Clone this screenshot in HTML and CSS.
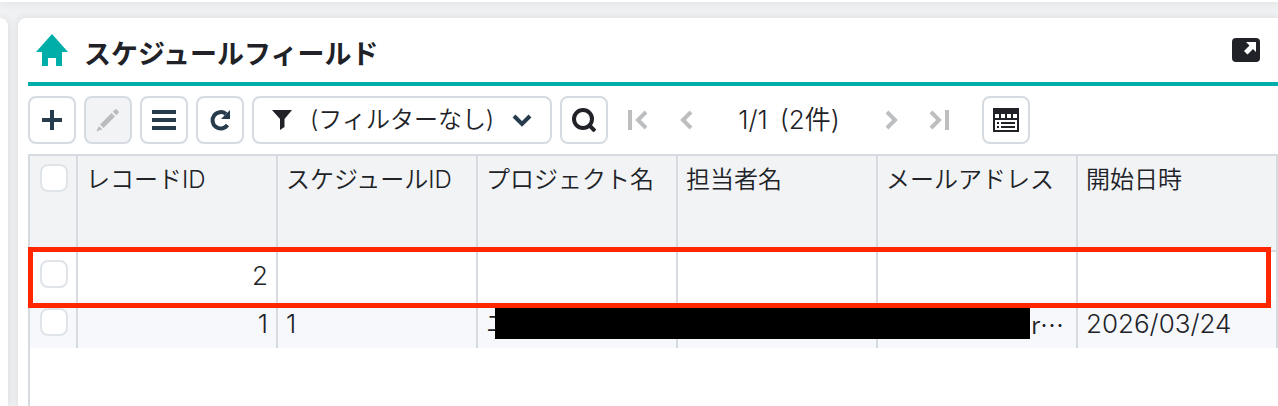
FILE: index.html
```
<!DOCTYPE html>
<html lang="ja">
<head>
    <meta charset="UTF-8">
    <meta name="viewport" content="width=device-width, initial-scale=1.0">
    <title>スケジュールフィールド</title>
    <link rel="stylesheet" href="styles.css">
</head>
<body>
    <div class="topbar"></div>
    <div class="layout">
        <aside class="side"></aside>
        <main class="panel">
            <header class="panel-head">
                <svg class="home" viewBox="0 0 32 32"><path d="M16 0 32 18H26V32H20V24H12V32H6V18H0Z"/></svg>
                <h1>スケジュールフィールド</h1>
                <button class="expand" aria-label="拡大">
                    <svg viewBox="0 0 28 24"><rect width="28" height="24" rx="4"/><path class="arrow" d="M14 4H24V14L21 11 15.500 16.500 12 13 17.500 7.500Z"/></svg>
                </button>
            </header>

            <div class="toolbar">
                <button class="btn" aria-label="追加"><svg viewBox="0 0 24 24"><path class="line" d="M12 2V22M2 12H22"/></svg></button>
                <button class="btn" aria-label="編集" disabled><svg viewBox="0 0 24 24"><path d="M4 16.500 15.500 5 19 8.500 7.500 20ZM16.800 3.700 18.800 1.700Q20 .7 21.300 2L22.300 3Q23.500 4.200 22.300 5.300L20.300 7.300ZM3 18 6.200 21.200 1 23.200Q.4 23 1 22Z"/></svg></button>
                <button class="btn" aria-label="一覧"><svg viewBox="0 0 24 24"><path class="line" d="M0 4H24M0 12H24M0 20H24"/></svg></button>
                <button class="btn" aria-label="再読み込み"><svg viewBox="0 0 24 24"><path class="line" d="M19.500 17A8.200 8.200 0 1 1 18 6"/><path d="M22 2V11H13Z"/></svg></button>
                <div class="filter">
                    <svg class="funnel" viewBox="0 0 20 20"><path d="M0 0H20L12.500 9V17L8 20V9Z"/></svg>
                    <select aria-label="フィルター">
                        <option>(フィルターなし)</option>
                    </select>
                    <svg class="chevron" viewBox="0 0 20 14"><path class="line" d="M2 2 10 10 18 2"/></svg>
                </div>
                <button class="btn search" aria-label="検索"><svg viewBox="0 0 24 24"><circle class="line" cx="11" cy="11" r="9"/><path class="line" d="M16.500 16.500 23 23"/></svg></button>
                <nav class="pager">
                    <button aria-label="最初" disabled><svg viewBox="0 0 24 24"><path class="line" d="M4 2V22M20 4 12 12 20 20"/></svg></button>
                    <button aria-label="前へ" disabled><svg viewBox="0 0 24 24"><path class="line" d="M17 4 9 12 17 20"/></svg></button>
                    <span class="pages"><span>1/1</span> <span>(2件)</span></span>
                    <button aria-label="次へ" disabled><svg viewBox="0 0 24 24"><path class="line" d="M7 4 15 12 7 20"/></svg></button>
                    <button aria-label="最後" disabled><svg viewBox="0 0 24 24"><path class="line" d="M3 4 11 12 3 20M19 2V22"/></svg></button>
                </nav>
                <button class="btn view" aria-label="表示"><svg viewBox="0 0 26 24"><path fill-rule="evenodd" d="M0 0H26V24H0ZM2 6V10H6V6ZM8 6V10H12V6ZM14 6V10H18V6ZM20 6V10H24V6ZM2 12V22H24V12Z"/><path d="M4 14H6V16H4ZM8 14H22V16H8ZM4 18H6V20H4ZM8 18H22V20H8Z"/></svg></button>
            </div>

            <div class="grid">
                <table>
                    <colgroup>
                        <col class="check-col">
                        <col span="6">
                    </colgroup>
                    <thead>
                        <tr>
                            <th class="check"><input type="checkbox" aria-label="すべて選択"></th>
                            <th>レコードID</th>
                            <th>スケジュールID</th>
                            <th>プロジェクト名</th>
                            <th>担当者名</th>
                            <th>メールアドレス</th>
                            <th>開始日時</th>
                        </tr>
                    </thead>
                    <tbody>
                        <tr>
                            <td class="check"><input type="checkbox" aria-label="レコード2を選択"></td>
                            <td class="num">2</td>
                            <td></td>
                            <td></td>
                            <td></td>
                            <td></td>
                            <td></td>
                        </tr>
                        <tr>
                            <td class="check"><input type="checkbox" aria-label="レコード1を選択"></td>
                            <td class="num">1</td>
                            <td class="digits">1</td>
                            <td class="masked">エ<span class="mask"></span></td>
                            <td></td>
                            <td class="mail">r⋯</td>
                            <td class="digits">2026/03/24</td>
                        </tr>
                    </tbody>
                </table>
                <div class="highlight"></div>
            </div>
        </main>
    </div>
</body>
</html>
```
FILE: styles.css
```
* {
    box-sizing: border-box;
}
body {
    margin: 0;
    min-height: 100vh;
    display: flex;
    flex-direction: column;
    background: #f0f1f3;
    color: #202227;
    font-family: Inter, "Noto Sans CJK JP", sans-serif;
    font-size: 24px;
    font-weight: 350;
    line-height: 32px;
    overflow: hidden;
}
button {
    padding: 0;
    border: none;
    background: none;
    display: flex;
    align-items: center;
    justify-content: center;
}
svg {
    display: block;
    fill: currentColor;
}
.line {
    fill: none;
    stroke: currentColor;
    stroke-width: 4;
}
.topbar {
    height: 2px;
    background: #fff;
    box-shadow: 0 0 8px rgba(0, 0, 0, 0.2);
}
.layout {
    flex: 1;
    display: flex;
    gap: 10px;
    padding-top: 16px;
}
.side {
    width: 8px;
    background: #fff;
    border-radius: 0 8px 0 0;
    box-shadow: 0 0 8px rgba(0, 0, 0, 0.1);
}
.panel {
    flex: 1;
    min-width: 0;
    display: flex;
    flex-direction: column;
    padding-left: 10px;
    background: #fff;
    border-radius: 8px 0 0 0;
    box-shadow: 0 0 8px rgba(0, 0, 0, 0.1);
}

/* title */
.panel-head {
    display: flex;
    align-items: center;
    height: 68px;
    padding: 0 18px 0 8px;
    border-bottom: 4px solid #00aea9;
}
.home {
    width: 32px;
    height: 32px;
    color: #00aea9;
}
h1 {
    flex: 1;
    margin: 10px 0 0 16px;
    font-size: 27px;
    font-weight: 700;
    line-height: 40px;
}
.expand {
    color: #202227;
}
.expand svg {
    width: 28px;
    height: 24px;
}
.arrow {
    fill: #fff;
}

/* toolbar */
.toolbar {
    display: flex;
    gap: 8px;
    padding: 10px 0;
}
.btn {
    width: 48px;
    height: 48px;
    border: 2px solid #d6dbe2;
    border-radius: 8px;
    background: #fff;
    color: #263b4c;
}
.btn svg {
    width: 24px;
    height: 24px;
}
.btn:disabled {
    background: #f1f3f5;
    color: #b9bdc0;
}
.btn.search,
.btn.view {
    color: #202227;
}
.view svg {
    width: 26px;
}
.filter {
    position: relative;
    width: 300px;
}
.filter select {
    width: 100%;
    height: 48px;
    padding: 0 48px 0 56px;
    border: 2px solid #d6dbe2;
    border-radius: 8px;
    background: #fff;
    color: inherit;
    font: inherit;
    appearance: none;
}
.filter svg {
    position: absolute;
    pointer-events: none;
}
.funnel {
    top: 14px;
    left: 20px;
    width: 20px;
}
.chevron {
    top: 18px;
    right: 20px;
    width: 20px;
    color: #263b4c;
}
.pager {
    display: flex;
    align-items: center;
    margin: 0 10px 0 -2px;
}
.pager button {
    width: 48px;
    height: 48px;
    color: #bcbec0;
}
.pager svg {
    width: 24px;
    height: 24px;
}
.pages {
    display: flex;
    justify-content: center;
    gap: 12px;
    width: 158px;
    font-size: 26px;
}

/* records */
.grid {
    position: relative;
    flex: 1;
    border-left: 2px solid #d6dbe2;
}
table {
    width: 100%;
    table-layout: fixed;
    border-collapse: separate;
    border-spacing: 0;
    border-top: 2px solid #d6dbe2;
}
.check-col {
    width: 48px;
}
th,
td {
    height: 48px;
    padding: 8px;
    border-right: 2px solid #d6dbe2;
    font-weight: 350;
    text-align: left;
    vertical-align: top;
    white-space: nowrap;
}
th {
    height: 96px;
    background: #f1f3f5;
    border-bottom: 2px solid #d6dbe2;
}
tbody tr:nth-child(even) {
    background: #f7f8fc;
}
td.num,
td.mail {
    text-align: right;
}
td.mail {
    padding-right: 12px;
    font-family: "Noto Sans CJK JP", sans-serif;
}
.num,
.digits {
    font-size: 26px;
}
.check {
    padding: 8px 10px;
}
input[type="checkbox"] {
    display: block;
    width: 28px;
    height: 28px;
    margin: 0;
    border: 2px solid #e0e4e9;
    border-radius: 8px;
    background: #fff;
    appearance: none;
}
.masked {
    position: relative;
}
.mask {
    position: absolute;
    top: 8px;
    left: 17px;
    width: 535px;
    height: 31px;
    background: #000;
    z-index: 1;
}
.highlight {
    position: absolute;
    top: 93px;
    left: -2px;
    right: 7px;
    height: 61px;
    border: 5px solid #ff2600;
    z-index: 2;
}
```
